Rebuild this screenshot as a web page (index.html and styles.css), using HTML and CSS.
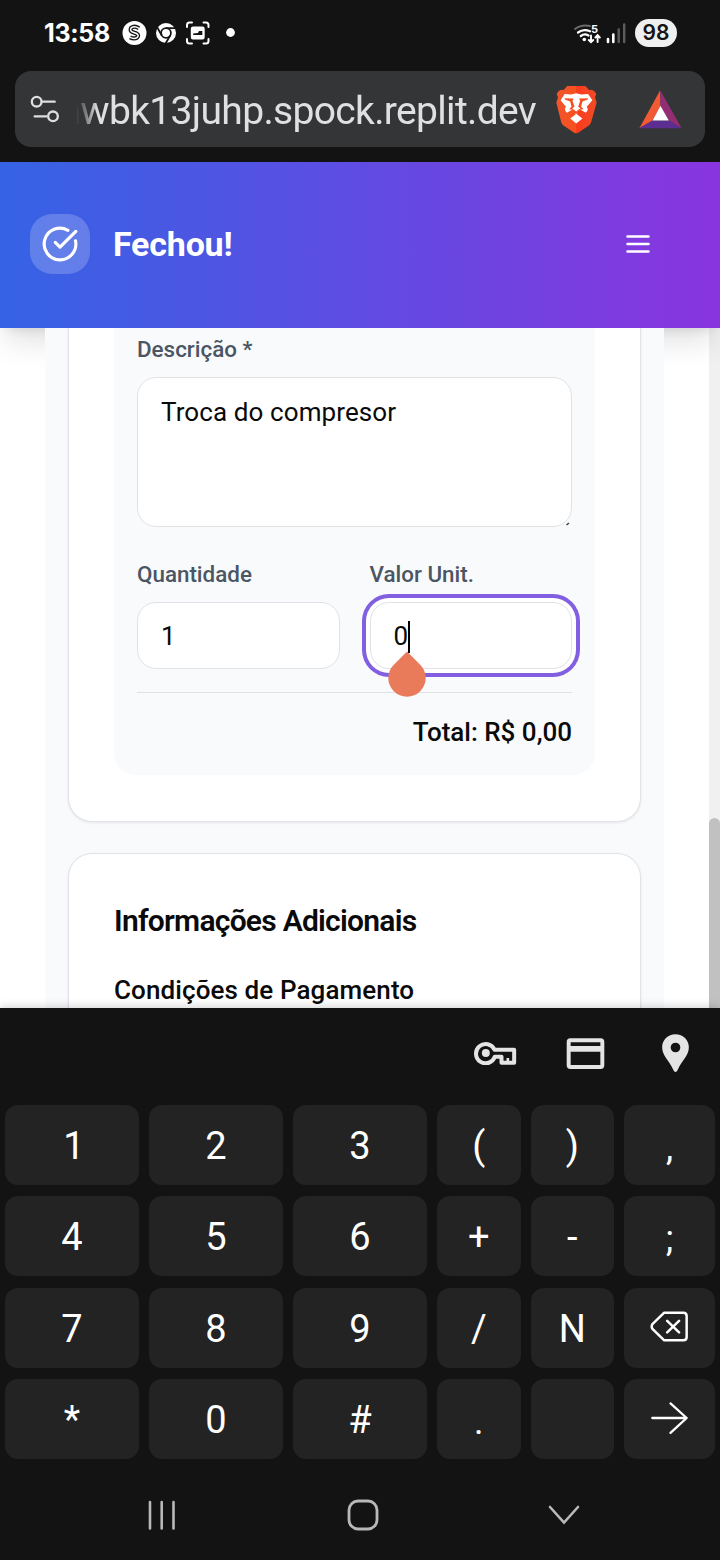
FILE: index.html
```html
<!DOCTYPE html>
<html lang="pt-BR">
<head>
<meta charset="utf-8">
<title>Fechou!</title>
<link rel="stylesheet" href="styles.css">
</head>
<body>
<div class="phone">
  <div class="status">
    <span class="clock">13:58</span>
    <svg class="status-left" viewBox="0 0 114 26" width="114" height="26">
      <circle cx="12.500" cy="13" r="12" fill="#fff"/>
      <path d="M17 8.300Q12.500 5.300 9.200 7.800Q7.300 11 11 12.300L14.500 13.500Q17.500 15.300 15 17.600Q12 19.300 8 17.300" fill="none" stroke="#151515" stroke-width="4.200"/>
      <path d="M17 8.300Q12.500 5.300 9.200 7.800Q7.300 11 11 12.300L14.500 13.500Q17.500 15.300 15 17.600Q12 19.300 8 17.300" fill="none" stroke="#fff" stroke-width="1.500"/>
      <circle cx="44" cy="13" r="10" fill="#fff"/>
      <circle cx="44" cy="13" r="4.900" fill="none" stroke="#151515" stroke-width="1.800"/>
      <path d="M44 8.100H54M39.800 15.500L35.300 7.500M48.200 15.500L43.700 23.300" stroke="#151515" stroke-width="1.800"/>
      <g transform="translate(-10 0)">
        <path d="M75 7V5Q75 2.500 77.500 2.500H80M91.500 2.500H94Q96.500 2.500 96.500 5V7M96.500 19V21Q96.500 23.500 94 23.500H91.500M80 23.500H77.500Q75 23.500 75 21V19" fill="none" stroke="#fff" stroke-width="2" stroke-linecap="round"/>
        <rect x="80" y="7.800" width="11.500" height="10.500" rx="1" fill="none" stroke="#fff" stroke-width="2.400"/>
        <path d="M82 15V13.500L84.500 13L86.500 13.500L87.500 11H89.500V15Z" fill="#131313"/><path d="M81 7.800H91V11H87L86 13L81 13.500ZM81 15H91V18H81Z" fill="#fff"/>
      </g>
      <circle cx="108.500" cy="12.500" r="4.400" fill="#fff"/>
    </svg>
    <svg class="status-right" viewBox="0 0 54 22" width="54" height="22">
      <g fill="none" stroke-linecap="round">
        <path d="M2 7Q8.500 2.300 17 4" stroke="#6b6b6b" stroke-width="2"/>
        <path d="M5 10.500Q10.500 6.500 17 9.300M7.800 14Q11.500 11.200 15.500 13.500" stroke="#fff" stroke-width="2.200"/>
        <path d="M18 13.500V20M15.800 18L18 20.200L20.200 18M24.600 20V13.500M22.400 15.500L24.600 13.200L26.800 15.500" stroke="#fff" stroke-width="1.900"/>
      </g>
      <circle cx="11.300" cy="17.500" r="1.800" fill="#fff"/>
      <text x="18" y="11" class="wifi-gen">5</text>
      <path d="M35 17V20M40.300 12.500V20" stroke="#fff" stroke-width="2.600" stroke-linecap="round"/>
      <path d="M45.700 7.500V20M51.200 2.500V20" stroke="#5c5c5c" stroke-width="2.400" stroke-linecap="round"/>
    </svg>
    <span class="battery">98</span>
  </div>

  <div class="urlbar">
    <svg class="tune" viewBox="90 284 90 84" width="30" height="28" fill="none" stroke="#dedede" stroke-width="7" stroke-linecap="round">
      <circle cx="110" cy="304" r="14.500"/><path d="M127 304H164M104 348H139"/><circle cx="159" cy="348" r="14.500"/>
    </svg>
    <div class="url"><span>nwbk13juhp.spock.replit.dev</span></div>
    <svg class="brave" viewBox="588 253 124 148" width="41" height="49">
      <defs><linearGradient id="lion"><stop offset="0" stop-color="#f1562b"/><stop offset=".5" stop-color="#f6501f"/><stop offset=".5" stop-color="#fa3c1e"/><stop offset="1" stop-color="#f24a25"/></linearGradient></defs>
      <path fill="url(#lion)" d="M622 256H677L688 268Q701 265 710 280L706 290L711 306L694 366Q690 374 684 378L655 397Q649 401 643 397L614 378Q606 373 604 366L589 306L594 290L590 280Q598 265 611 268Z"/>
      <path fill="#fff" d="M614 280L634 282L649 278L665 282L685 280L698 299L681 319Q688 329 678 337L661 327L652 334V342L668 354L649 369L631 354L647 342V334L638 327L621 337Q611 329 618 319L602 299Z"/>
      <path fill="#f4501f" d="M614 293L641 294L638 301L644 319L637 323L649 333L662 323L655 319L661 301L658 294L685 293L684 297L668 303L664 318L671 326L661 328L649 341L638 328L628 326L635 318L631 303L615 297Z"/>
    </svg>
    <svg class="bat" viewBox="839 269 130 116" width="43" height="39">
      <path fill="#f05a35" d="M903 269L840 384L880 360L904 316Z"/>
      <path fill="#932e74" d="M903 269L968 384L929 360L904 316Z"/>
      <path fill="#5d2e91" d="M840 384H968L929 360H880Z"/>
      <path fill="#fff" d="M904 316L929 360H880Z"/>
    </svg>
  </div>

  <header class="header">
    <div class="logo">
      <svg viewBox="0 0 24 24" width="38" height="38" fill="none" stroke="#fff" stroke-width="2" stroke-linecap="round" stroke-linejoin="round"><path d="M21.801 10A10 10 0 1 1 17 3.335"/><path d="m9 11 3 3L22 4"/></svg>
    </div>
    <h1 class="brand">Fechou!</h1>
    <svg class="menu" viewBox="0 0 24 20" width="24" height="20" stroke="#fff" stroke-width="2.500" stroke-linecap="round"><path d="M1.500 2.500H22.500M1.500 10H22.500M1.500 17.400H22.500"/></svg>
  </header>

  <main class="viewport">
    <div class="panel">
      <section class="card card-items">
        <div class="item">
          <div class="label">Descrição *</div>
          <div class="field area">Troca do compresor
            <svg class="grip" viewBox="0 0 6 6" width="6" height="6"><path d="M1.500 5L4 3" stroke="#444" stroke-width="1.600"/></svg>
          </div>
          <div class="pair">
            <div><div class="label">Quantidade</div><div class="field">1</div></div>
            <div><div class="label">Valor Unit.</div><div class="field focused">0<span class="caret"></span>
              <svg class="handle" viewBox="0 0 38 46" width="38" height="46"><path fill="#e97b5a" d="M19 .500L32.200 13.700A18.700 18.700 0 1 1 5.800 13.700Z"/></svg>
            </div></div>
          </div>
          <div class="total">Total: R$ 0,00</div>
        </div>
      </section>
      <section class="card card-info">
        <h2 class="title">Informações Adicionais</h2>
        <div class="sub">Condições de Pagamento</div>
      </section>
    </div>
    <div class="scrollbar"><div class="thumb"></div></div>
  </main>

  <div class="keyboard">
    <div class="autofill">
      <svg viewBox="102 124 128 72" width="43" height="24" fill="none" stroke="#e4e4e4" stroke-width="12" stroke-linejoin="round">
        <path d="M163 150A29 29 0 1 0 164 171H184V189H222V150Z"/><circle cx="137" cy="160" r="12" fill="#e4e4e4" stroke="none"/><path d="M203 175V188" stroke-width="8"/>
      </svg>
      <svg viewBox="377 113 116 94" width="39" height="31" fill="none" stroke="#e4e4e4" stroke-width="12"><rect x="384" y="120" width="102" height="81" rx="5"/><path d="M384 146H486" stroke-width="17"/></svg>
      <svg viewBox="665 103 80 114" width="27" height="38" fill="#e4e4e4" fill-rule="evenodd"><path d="M705 104C682 104 665 121 665 143C665 168 683 178 699 212Q701 217 705 217Q709 217 711 212C727 178 745 168 745 143C745 121 728 104 705 104ZM705 129A14.500 14.500 0 1 0 705 158A14.500 14.500 0 1 0 705 129Z"/></svg>
    </div>
    <div class="keys">
      <div class="key one">1</div><div class="key">2</div><div class="key">3</div><div class="key">(</div><div class="key">)</div><div class="key punct">,</div>
      <div class="key">4</div><div class="key">5</div><div class="key">6</div><div class="key">+</div><div class="key">-</div><div class="key punct">;</div>
      <div class="key">7</div><div class="key">8</div><div class="key">9</div><div class="key">/</div><div class="key">N</div>
      <div class="key icon"><svg viewBox="660 394 118 94" width="39" height="31" fill="none" stroke="#fff" stroke-width="7.500" stroke-linecap="round" stroke-linejoin="round"><path d="M703 399H761Q771 399 771 409V473Q771 483 761 483H703L668 449Q662 441 668 433ZM712 424L748 459M748 424L712 459"/></svg></div>
      <div class="key">*</div><div class="key">0</div><div class="key">#</div><div class="key punct">.</div><div class="key"></div>
      <div class="key icon"><svg viewBox="660 664 118 102" width="39" height="34" fill="none" stroke="#fff" stroke-width="7" stroke-linecap="round" stroke-linejoin="round"><path d="M667 715H771M722 671L771 715L722 760"/></svg></div>
    </div>
    <nav class="nav">
      <svg viewBox="0 0 30 32" width="30" height="32" stroke="#b8b8b8" stroke-width="2.600" stroke-linecap="round"><path d="M3 3V29.500M14.700 3V29.500M26.500 3V29.500"/></svg>
      <svg viewBox="0 0 32 32" width="32" height="32" fill="none" stroke="#b8b8b8" stroke-width="2.800"><rect x="2" y="2" width="28" height="28" rx="9"/></svg>
      <svg viewBox="0 0 32 32" width="32" height="32" fill="none" stroke="#b8b8b8" stroke-width="2.600" stroke-linecap="round"><path d="M2 8L16 23.500L30 8"/></svg>
    </nav>
  </div>
</div>
</body>
</html>
```
FILE: styles.css
```css
* { box-sizing: border-box; }
body { margin: 0; background: #131313; font-family: Roboto, "Liberation Sans", sans-serif; }
svg { display: block; flex: none; }
.phone { width: 720px; height: 1560px; display: flex; flex-direction: column; overflow: hidden; background: #131313; }

.status { flex: none; height: 71px; padding: 0 43px 5px 44px; display: flex; align-items: center; color: #fff; }
.clock { width: 78px; font: 700 25px/30px Inter, sans-serif; letter-spacing: -0.3px; }
.status-right { margin-left: auto; margin-right: 8px; }
.wifi-gen { font: 700 11px Inter, sans-serif; fill: #fff; }
.battery { width: 42px; height: 28px; border-radius: 14px; background: #efefef; color: #151515; font: 600 21px/28px Inter, sans-serif; text-align: center; }

.urlbar { height: 76px; margin: 0 15px; padding: 0 23px 0 15px; border-radius: 16px; background: #343537; display: flex; align-items: center; flex: none; }
.url { width: 460px; height: 60px; margin-left: 16px; display: flex; justify-content: flex-end; overflow: hidden; color: #dfe0e1; font-size: 39px; line-height: 64px; letter-spacing: -0.66px; white-space: nowrap; -webkit-mask-image: linear-gradient(90deg, transparent, #000 22px); mask-image: linear-gradient(90deg, transparent, #000 22px); }
.brave { margin-left: 20px; }
.bat { margin-left: auto; }

.header { position: relative; height: 166px; margin-top: 15px; padding: 0 70px 2px 30px; flex: none; display: flex; align-items: center; background: linear-gradient(90deg, #3563e5, #8a35df); box-shadow: 0 19px 28px -6px rgba(0,0,0,.12), 0 8px 11px -8px rgba(0,0,0,.12); z-index: 1; }
.logo { width: 60px; height: 60px; border-radius: 22px; background: rgba(255,255,255,.2); display: flex; align-items: center; justify-content: center; }
.brand { margin: 0 0 0 23px; color: #fff; font-size: 34px; line-height: 40px; font-weight: 700; letter-spacing: -0.2px; }
.menu { margin-left: auto; }

.viewport { height: 680px; flex: none; display: flex; background: #fff; }
.panel { position: relative; z-index: 2; width: 619px; margin-left: 45px; padding: 0 23px; background: #f8fafc; overflow: hidden; }
.card { border: 1px solid #e1e3e6; background: #fff; box-shadow: 0 1px 3px rgba(0,0,0,.08); }
.card-items { height: 494px; padding: 0 45px 45px; border-top: 0; border-radius: 0 0 24px 24px; }
.card-info { height: 240px; margin-top: 31px; padding: 47px 45px 0; border-radius: 24px; }
.item { height: 447px; padding: 5px 23px 0; border-radius: 0 0 22px 22px; background: #f8fafc; }
.label { height: 32px; color: #4b5563; font-size: 22.400px; line-height: 33px; font-weight: 500; }
.pair .label { line-height: 31px; }
.field { position: relative; height: 67px; margin-top: 11px; padding: 0 23px; border: 1px solid #e0e2e5; border-radius: 19px; background: #fff; color: #0a0a0a; font-size: 26px; line-height: 66px; }
.area { height: 150px; margin: 12px 0 32px; padding-top: 15px; line-height: 38px; letter-spacing: 0.1px; }
.grip { position: absolute; right: 0; bottom: 0; }
.pair { display: grid; grid-template-columns: 1fr 1fr; gap: 30px; }
.focused { box-shadow: 0 0 0 4px #fff, 0 0 0 8px #825fe0; }
.caret { position: absolute; left: 37px; top: 18px; width: 2px; height: 32px; background: #000; }
.handle { position: absolute; left: 17px; top: 48px; }
.total { margin-top: 23px; padding-top: 20px; border-top: 1px solid #dfe1e5; text-align: right; color: #0a0a0a; font-size: 26px; line-height: 38px; font-weight: 500; }
.title { margin: 0; color: #0a0a0a; font-size: 30px; line-height: 40px; font-weight: 600; letter-spacing: -0.75px; }
.sub { margin-top: 29px; color: #0a0a0a; font-size: 26px; line-height: 40px; font-weight: 500; letter-spacing: 0.1px; }
.scrollbar { width: 11px; margin-left: auto; padding-top: 490px; background: #f0f0f0; }
.thumb { height: 190px; border-radius: 6px 6px 0 0; background: #c1c1c1; }

.keyboard { position: relative; z-index: 3; flex: 1; background: #131313; box-shadow: 0 -2px 8px rgba(0,0,0,.16); }
.autofill { height: 97px; padding: 0 31px 7px 0; display: flex; align-items: center; justify-content: flex-end; }
.autofill svg:nth-child(2) { margin: 0 57px 0 49px; }
.keys { padding: 0 5px; display: grid; grid-template-columns: 134px 134px 134px 83.500px 83.500px 91px; grid-auto-rows: 80px; gap: 11.400px 10px; }
.key { border-radius: 13px; background: #232323; color: #fff; display: flex; align-items: center; justify-content: center; font-size: 38px; line-height: 80px; padding-top: 2px; }
.key.one { padding-left: 4px; }
.key.icon { padding: 0 0 2px; }
.key.punct { padding-top: 6px; font-size: 36px; }
.nav { height: 100px; padding: 0 140px 0 147px; margin-top: 6px; display: flex; align-items: center; justify-content: space-between; }
```
